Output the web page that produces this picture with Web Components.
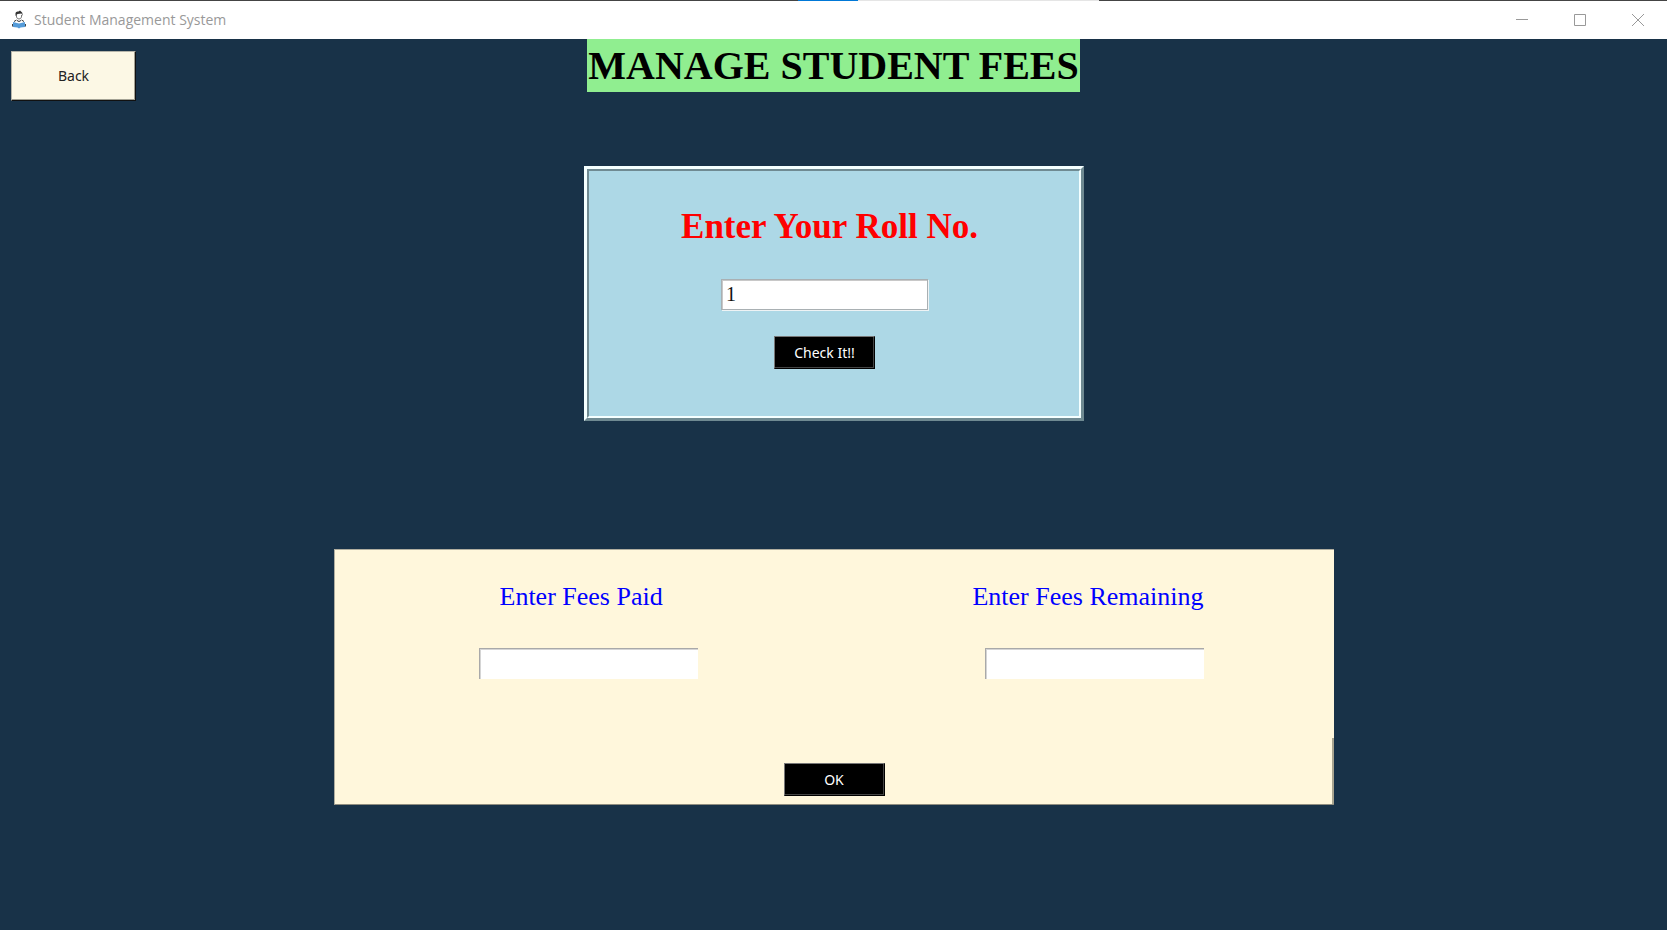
<!DOCTYPE html>
<html lang="en">
<head>
<meta charset="utf-8">
<title>Student Management System</title>
<style>
  html, body { margin: 0; min-height: 100%; background: #183248; }
  body { font-family: "Liberation Serif", "Times New Roman", serif; }
</style>
</head>
<body>
<fees-page></fees-page>
<script>
const define = (name, html, setup) => customElements.define(name, class extends HTMLElement {
  constructor() {
    super();
    const t = document.createElement('template');
    t.innerHTML = html;
    this.attachShadow({ mode: 'open' }).append(t.content.cloneNode(true));
  }
  connectedCallback() { if (setup) setup(this, this.shadowRoot); }
});

define('app-icon', `
<style>:host { display: block; width: 16px; height: 20px; } svg { display: block; }</style>
<svg width="16" height="20" viewBox="0 0 16 20" aria-hidden="true">
  <path d="M5.500 5V7Q6 9 8 9Q10 9 10.500 7V5" fill="#fff" stroke="#777" stroke-width="1"/>
  <path d="M4.500 6V3Q5 1 7.500 1.500L9 .5L10 1.500Q11.500 2 11.500 4V6L10.500 3.500L6.500 4Z" fill="#333"/>
  <path d="M3 11.500L5.500 10M10.500 10L13 11.500M6 10.500L8 11.500L10 10.500" fill="none" stroke="#333" stroke-width="1"/>
  <path d="M2 12L8 13.500L14 12V17L9.500 17.500L8 18.500L6.500 17.500L2 17Z" fill="#559bd8"/>
  <path d="M1 14H2V16.500H1ZM14 14H15V16.500H14Z" fill="#444"/>
</svg>`);

define('title-bar', `
<style>
  :host { display: block; background: #fff; }
  .strip { display: grid; grid-template-columns: 798fr 60fr 241fr 568fr; height: 1px; background: #444; }
  .strip i:nth-child(2) { background: #0078d7; }
  .strip i:nth-child(3) { background: #e5e5e5; }
  .bar { display: flex; align-items: center; height: 38px; padding-left: 11px; gap: 7px; }
  .name { flex: 1; font: 14px/20px "Open Sans", "Noto Sans", sans-serif; color: #999; }
  .controls { display: flex; }
  button { display: grid; place-items: center; width: 58px; height: 38px; padding: 0; border: 0; background: none; }
  svg { display: block; fill: none; stroke: #999; }
</style>
<div class="strip"><i></i><i></i><i></i><i></i></div>
<div class="bar">
  <app-icon></app-icon>
  <span class="name"><slot></slot></span>
  <div class="controls">
    <button type="button" aria-label="Minimize"><svg width="12" height="12"><path d="M0 5.500H12"/></svg></button>
    <button type="button" aria-label="Maximize"><svg width="12" height="12"><path d="M.5 .5H11.500V11.500H.5Z"/></svg></button>
    <button type="button" aria-label="Close"><svg width="12" height="12"><path d="M0 0L12 12M12 0L0 12"/></svg></button>
  </div>
</div>`);

define('raised-button', `
<style>
  :host { display: block; width: 101px; height: 33px; }
  button {
    display: block; box-sizing: border-box; width: 100%; height: 100%; padding: 0;
    font: 14px/20px "Noto Sans", "Open Sans", sans-serif;
    color: #fff; background: #000;
    border: 1px solid; border-color: #777 #000 #000 #777;
    box-shadow: inset -1px -1px #444;
  }
  :host([tone="light"]) { width: 125px; height: 50px; }
  :host([tone="light"]) button {
    color: #222; background: #fcf8e5;
    border-color: #b5b5aa #111 #111 #b5b5aa;
    box-shadow: inset -1px -1px #a3a294;
  }
</style>
<button type="button"><slot></slot></button>`);

define('text-field', `
<style>
  :host { display: flex; flex-direction: column; align-items: center; }
  label { font-size: 26px; line-height: 30px; color: #00f; white-space: nowrap; }
  input {
    box-sizing: border-box; width: 219px; height: 31px; margin: 36px 0 0; padding: 0 4px;
    font: 20px/28px "Liberation Serif", serif; color: #111; background: #fff;
    border: 0 solid #a9a9a9; border-width: 1px 0 0 1px; border-radius: 0; outline: 0;
    box-shadow: inset 1px 1px #d5d5d5;
  }
  :host([align="start"]) { align-items: flex-start; }
  :host([align="start"]) label { padding-left: 21px; }
  :host([align="end"]) { align-items: flex-end; }
  :host([size="large"]) label { padding-left: 10px; font-size: 35px; font-weight: bold; line-height: 40px; color: #f00; }
  :host([size="large"]) input {
    width: 207px; height: 31px; margin-top: 32px;
    border: 1px solid #a9b0b3; box-shadow: inset 1px 1px #c8c8c8, 1px 1px #eef3f5;
  }
</style>
<label for="field"></label>
<input id="field" type="text" autocomplete="off">`, (host, root) => {
  root.querySelector('label').textContent = host.getAttribute('label');
  root.querySelector('input').value = host.getAttribute('value') || '';
});

define('roll-panel', `
<style>
  :host { display: block; box-sizing: border-box; width: 500px; max-width: 100%; border: 3px solid; border-color: #f4ffff #6f8a92 #6f8a92 #f4ffff; }
  .inner {
    display: flex; flex-direction: column; align-items: center; gap: 26px;
    padding: 36px 18px 47px 0; background: #add8e6;
    border: 2px solid; border-color: #6f8a92 #f4ffff #f4ffff #6f8a92;
  }
</style>
<div class="inner"><slot></slot></div>`);

define('fees-panel', `
<style>
  :host {
    display: flex; flex-direction: column; box-sizing: border-box; width: 1000px; max-width: 100%;
    background: linear-gradient(#a9a48f, #a9a48f) right bottom / 2px 66px no-repeat #fff7dc;
    border: 1px solid; border-color: #b0aea0 transparent #8f8d80 #b0aea0; border-right: 0;
    padding-bottom: 8px;
  }
  .fields { display: flex; justify-content: space-between; padding: 32px 130px 84px 144px; }
  .action { display: flex; justify-content: center; }
</style>
<div class="fields"><slot></slot></div>
<div class="action"><slot name="action"></slot></div>`);

define('fees-page', `
<style>
  :host { display: block; }
  header { display: grid; grid-template-columns: 1fr auto 1fr; align-items: start; padding: 0 11px; }
  raised-button[tone] { margin-top: 12px; }
  h1 {
    margin: 0; padding: 0 1px; background: #90ee90; color: #000; white-space: nowrap;
    font: bold 40px/53px "Liberation Serif", serif;
  }
  main { display: flex; flex-direction: column; align-items: center; gap: 128px; padding: 65px 0; }
</style>
<title-bar>Student Management System</title-bar>
<header>
  <raised-button tone="light">Back</raised-button>
  <h1>MANAGE STUDENT FEES</h1>
</header>
<main>
  <roll-panel>
    <text-field size="large" label="Enter Your Roll No." value="1"></text-field>
    <raised-button>Check It!!</raised-button>
  </roll-panel>
  <fees-panel>
    <text-field align="start" label="Enter Fees Paid"></text-field>
    <text-field align="end" label="Enter Fees Remaining"></text-field>
    <raised-button slot="action">OK</raised-button>
  </fees-panel>
</main>`);
</script>
</body>
</html>
